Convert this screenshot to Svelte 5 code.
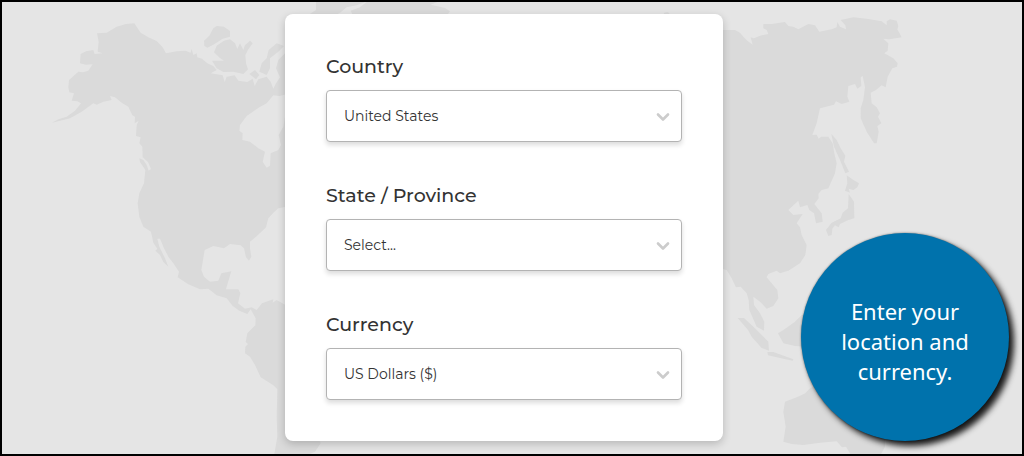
<script lang="ts">
  type Field = {
    id: string;
    label: string;
    value: string;
    options: string[];
  };

  let fields: Field[] = [
    { id: 'country', label: 'Country', value: 'United States', options: ['United States'] },
    { id: 'state', label: 'State / Province', value: 'Select...', options: ['Select...'] },
    { id: 'currency', label: 'Currency', value: 'US Dollars ($)', options: ['US Dollars ($)'] }
  ];
</script>

<main class="page">
  <svg class="map" viewBox="6 6 3060 1356" preserveAspectRatio="xMidYMin slice" aria-hidden="true">
    <!-- Americas -->
    <path d="M156 368L175 358 200 350 225 332 243 310 232 304 215 302 222 280 208 277 205 262 207 240 235 215 250 217 265 212 278 193 258 194 240 190 242 162 258 154 280 150 284 162 308 160 293 155 296 125 291 100 320 98 350 80 378 72 403 70 422 98 445 112 470 123 488 142 498 160 530 154 556 152 572 158 575 146 580 165 590 160 592 172 606 176 622 190 640 198 650 210 632 220 668 226 674 246 680 230 704 226 715 242 742 246 758 236 764 258 775 238 800 230 812 245 820 266 828 250 840 232 828 205 835 180 870 145V280L838 288 820 286 800 310 778 322 740 348 720 375 718 392 728 400 727 420 750 425 775 445 795 455 788 485 800 503 810 497 812 460 835 450 843 435 836 405 850 380 855 350 880 340V620L855 621 835 625 820 638 805 655 798 682 790 690 768 710 750 725 750 745 754 770 747 782 738 772 732 745 722 736 690 732 672 745 640 738 614 750 609 780 604 810 612 830 630 845 655 842 664 820 694 814 686 840 678 868 715 868 721 880 714 910 735 926 755 922 770 930 786 910 820 898 818 908 830 900 855 914 880 914 950 1300 962 1330 945 1355 915 1368H822L832 1310 830 1250 832 1168 820 1156 782 1132 765 1095 750 1070 735 1060 736 1040 744 1032 737 1026 742 1000 766 976 767 955 752 928 742 942 718 932 698 918 680 895 650 886 625 866 600 868 565 853 533 832 537 815 520 790 505 770 492 745 480 716 472 716 478 740 495 775 505 800 490 786 480 765 466 752 472 746 460 728 453 695 430 680 418 650 413 610 418 580 432 550 436 510 420 486 418 475 430 480 440 495 446 512 453 507 444 486 428 472 427 440 418 430 422 412 408 408 410 376 416 362 404 370 405 350 397 346 385 320 365 308 345 292 330 288 335 300 310 305 290 314 280 310 245 335 210 355Z" />
    <path d="M612 122L628 107 640 85 650 78 672 80 690 93 690 110 668 116 640 134 622 143 613 138Z" />
    <path d="M642 157L650 137 672 122 690 118 705 130 712 147 720 130 730 150 735 135 742 130 750 122 758 130 745 148 736 165 738 190 744 208 730 222 700 215 670 216 650 205 636 182 672 182 660 174Z" />
    <path d="M778 215L785 190 800 175 806 150 830 130 852 138 835 155 810 175 810 205 800 225ZM748 222L765 210 778 225 768 238Z" />
    <!-- Arctic islands and Greenland -->
    <path d="M948 6H1095L1070 16 1040 22 1020 38 1000 48H920L948 30ZM1100 6H1312L1292 14 1335 24 1350 34 1340 48H1060L1052 32 1080 22ZM1990 48L1992 38 2004 36 2014 48Z" />
    <!-- Asia -->
    <g transform="translate(2160 0)">
      <path d="M-20 90H45L60 98 70 110 82 122 98 134 92 112 102 115 120 107 145 102 140 90 130 85 130 72 155 72 195 66 205 78 220 80 235 88 265 72 285 76 298 95 335 88 350 82 352 66 360 80 378 88 376 76 362 60 400 52 440 56 485 64 500 76 500 64 510 58 530 62 535 78 532 88 545 112 508 118 490 116 505 130 503 152 493 160 520 175 533 190 531 200 517 205 503 230 497 262 485 256 468 270 452 278 455 310 470 322 480 340 474 350 484 370 472 378 476 395 470 430 462 430 440 395 422 355 422 325 430 300 435 262 428 228 422 232 424 258 412 266 405 252 385 258 382 290 388 305 365 312 348 304 342 314 300 325 290 370 277 405 290 404 296 416 304 410 325 410 338 430 343 460 350 490 345 520 325 565 305 570 295 582 296 595 283 612 305 640 308 665 288 670 282 640 268 630 262 615 240 622 235 602 205 630 220 645 248 642 230 670 240 682 245 705 260 735 256 765 240 790 205 812 180 820 170 812 145 822 140 832 172 870 175 895 160 918 140 926 120 905 100 890 102 915 120 940 133 965 132 992 110 980 88 930 86 900 80 880 62 860 48 862 35 835 20 810-20 800Z" />
      <path d="M334 402L350 420 362 445 376 467 372 485 387 515 376 520 360 480 342 440ZM380 526L400 540 417 550 412 562 400 570 386 566 390 578 375 572 382 550ZM386 582L402 605 403 655 385 660 360 672 356 682 345 676 337 686 335 705 325 708 318 690 335 668 362 655 368 638 384 625Z" />
      <path d="M53 954L72 954 105 985 145 1025 147 1052 125 1044 95 1010 84 990ZM142 1056L160 1056 220 1078 218 1082 190 1076 144 1066ZM174 1000L190 990 225 965 245 945H270L260 1040 225 1038 190 1030Z" />
      <path d="M195 1205L230 1192 256 1180 270 1165 290 1155H495V1340L480 1368H395L378 1340 366 1342 350 1324 300 1328 250 1335 215 1332 190 1325 197 1280 190 1235Z" />
    </g>
  </svg>

  <form class="card">
    {#each fields as field (field.id)}
      <div class="field">
        <label for={field.id}>{field.label}</label>
        <div class="select-box">
          <select id={field.id} bind:value={field.value}>
            {#each field.options as option}
              <option value={option}>{option}</option>
            {/each}
          </select>
          <svg class="chevron" viewBox="0 0 14 10" aria-hidden="true">
            <path d="M2 2.5l5 5 5-5" />
          </svg>
        </div>
      </div>
    {/each}
  </form>

  <aside class="callout">
    <p>Enter your location and currency.</p>
  </aside>
</main>

<style>
:global(body) {
  margin: 0;
}
.page {
  position: relative;
  box-sizing: border-box;
  min-height: 100vh;
  padding: 12px 28px 12px 12px;
  border: 2px solid #000;
  background: #e5e5e5;
  overflow: hidden;
  font-family: Montserrat, Inter, "Open Sans", sans-serif;
  color: #333;
}
.map {
  position: absolute;
  inset: 0;
  width: 100%;
  height: 100%;
  fill: #dadada;
}
.card {
  position: relative;
  display: flex;
  flex-direction: column;
  gap: 42px;
  box-sizing: border-box;
  max-width: 438px;
  margin: 0 auto;
  padding: 41px;
  background: #fff;
  border-radius: 8px;
  box-shadow: 0 3px 8px rgba(0, 0, 0, 0.2);
}
.field {
  display: flex;
  flex-direction: column;
  gap: 11px;
}
label {
  font-size: 19px;
  font-weight: 500;
  line-height: 24px;
}
.select-box {
  position: relative;
}
select {
  display: block;
  appearance: none;
  width: 100%;
  height: 52px;
  padding: 0 44px 0 17px;
  border: 1px solid #b3b3b3;
  border-radius: 4px;
  background: #fff;
  box-shadow: 0 3px 5px rgba(0, 0, 0, 0.14);
  color: #333;
  font-family: inherit;
  font-size: 14px;
}
.chevron {
  position: absolute;
  top: 22px;
  right: 12px;
  width: 14px;
  height: 10px;
  fill: none;
  stroke: #ccc;
  stroke-width: 2.6;
  stroke-linecap: round;
  stroke-linejoin: round;
  pointer-events: none;
}
.callout {
  position: absolute;
  right: 13px;
  bottom: 13px;
  display: flex;
  align-items: center;
  justify-content: center;
  width: 208px;
  height: 208px;
  border-radius: 50%;
  background: #0072ac;
  box-shadow: 5px 5px 6px rgba(0, 0, 0, 0.9), 0 0 2px rgba(0, 0, 0, 0.5);
}
.callout p {
  max-width: 144px;
  margin: 0;
  padding-top: 8px;
  color: #fff;
  font-family: "Myriad Pro", "Noto Sans", "Open Sans", sans-serif;
  font-size: 22px;
  line-height: 30px;
  text-align: center;
}
</style>
